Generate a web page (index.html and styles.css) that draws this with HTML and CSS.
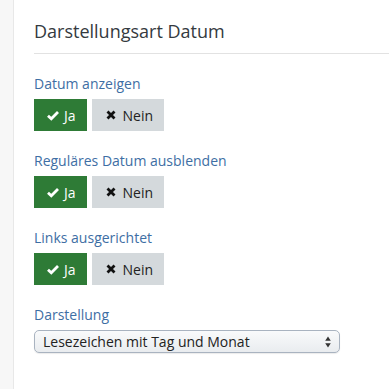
FILE: index.html
```html
<!DOCTYPE html>
<html lang="de">
<head>
    <meta charset="UTF-8">
    <title>Darstellungsart Datum</title>
    <meta name="viewport" content="width=device-width, initial-scale=1.0">
    <link rel="stylesheet" href="styles.css">
</head>
<body>
    <div class="page">
        <div class="sidebar"></div>
        <div class="content">
            <h2 class="title">Darstellungsart Datum</h2>

            <div class="field">
                <div class="label">Datum anzeigen</div>
                <div class="toggle">
                    <button class="btn btn-yes">
                        <svg class="icon" viewBox="0 0 12 10"><path d="M1 5.2 L4.3 8.3 L11 1.6" fill="none" stroke="#fff" stroke-width="2.8"/></svg>Ja
                    </button>
                    <button class="btn btn-no">
                        <svg class="icon icon-x" viewBox="0 0 10 10"><path d="M1.5 1.5 L8.5 8.5 M8.5 1.5 L1.5 8.5" fill="none" stroke="#111" stroke-width="2.8"/></svg>Nein
                    </button>
                </div>
            </div>

            <div class="field">
                <div class="label">Reguläres Datum ausblenden</div>
                <div class="toggle">
                    <button class="btn btn-yes">
                        <svg class="icon" viewBox="0 0 12 10"><path d="M1 5.2 L4.3 8.3 L11 1.6" fill="none" stroke="#fff" stroke-width="2.8"/></svg>Ja
                    </button>
                    <button class="btn btn-no">
                        <svg class="icon icon-x" viewBox="0 0 10 10"><path d="M1.5 1.5 L8.5 8.5 M8.5 1.5 L1.5 8.5" fill="none" stroke="#111" stroke-width="2.8"/></svg>Nein
                    </button>
                </div>
            </div>

            <div class="field">
                <div class="label">Links ausgerichtet</div>
                <div class="toggle">
                    <button class="btn btn-yes">
                        <svg class="icon" viewBox="0 0 12 10"><path d="M1 5.2 L4.3 8.3 L11 1.6" fill="none" stroke="#fff" stroke-width="2.8"/></svg>Ja
                    </button>
                    <button class="btn btn-no">
                        <svg class="icon icon-x" viewBox="0 0 10 10"><path d="M1.5 1.5 L8.5 8.5 M8.5 1.5 L1.5 8.5" fill="none" stroke="#111" stroke-width="2.8"/></svg>Nein
                    </button>
                </div>
            </div>

            <div class="field">
                <div class="label">Darstellung</div>
                <div class="select">
                    <span>Lesezeichen mit Tag und Monat</span>
                    <svg class="arrows" viewBox="0 0 6 12"><path d="M3 0.5 L5.8 4.8 H0.2 Z M3 11.5 L5.8 7.2 H0.2 Z" fill="#333"/></svg>
                </div>
            </div>
        </div>
    </div>
</body>
</html>
```

FILE: styles.css
```css
body { margin: 0; font-family: "Open Sans", Arial, sans-serif; background: #fff; }
.page { display: flex; min-height: 389px; }
.sidebar { width: 13px; background: #f7f7f7; border-right: 1px solid #e8e8e8; flex-shrink: 0; }
.content { flex: 1; padding-left: 20px; }
.title {
    margin: 19px 0 0; padding-bottom: 9px; font-size: 18px; line-height: 25px; font-weight: 400;
    color: #343a40; border-bottom: 1px solid #e2e2e2;
}
.field { margin-top: 20px; }
.label { font-size: 14px; line-height: 20px; color: #3e6ea4; margin-bottom: 5px; }
.toggle { display: flex; gap: 5px; }
.btn {
    display: flex; align-items: center; gap: 6px; height: 32px; padding: 0 12px;
    border: none; border-radius: 0; font-family: inherit; font-size: 14px; cursor: pointer;
}
.btn-yes { background: #2e7b36; color: #fff; padding-left: 13px; padding-right: 11px; gap: 5px; }
.btn-no { background: #d4d9dc; color: #222; padding-left: 14px; padding-right: 11px; gap: 7px; }
.icon { width: 12px; height: 11px; }
.icon-x { width: 10px; height: 10px; }
.select {
    display: flex; align-items: center; justify-content: space-between; box-sizing: border-box;
    width: 306px; height: 23px; padding: 0 8px 0 8px; border: 1px solid #a9b3c0; border-radius: 5px;
    background: linear-gradient(#f9fafb, #e9ecef); font-size: 14px; color: #222;
    box-shadow: 0 1px 1px rgba(0,0,0,0.08);
}
.arrows { width: 6px; height: 12px; }
```
